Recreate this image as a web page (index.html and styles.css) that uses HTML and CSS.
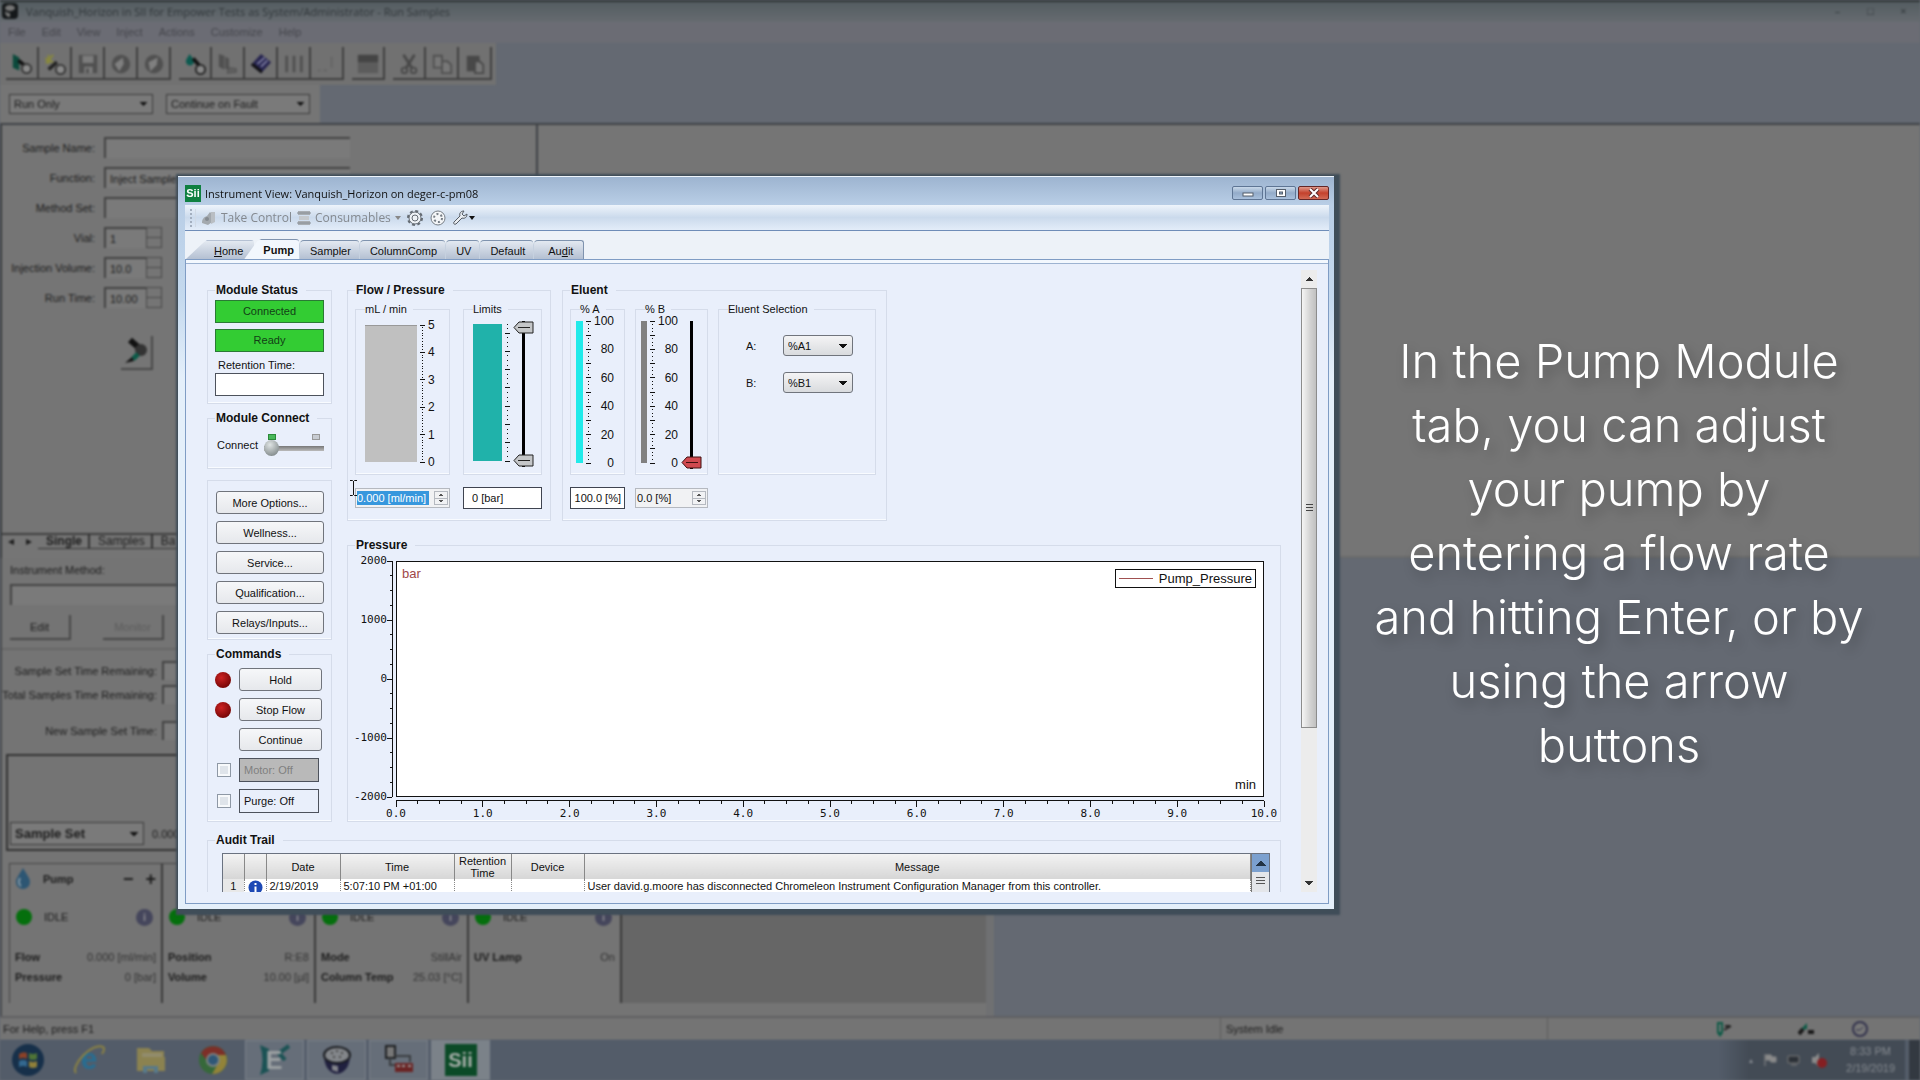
FILE: index.html
```html
<!DOCTYPE html>
<html lang="en">
<head>
  <meta charset="UTF-8">
  <meta name="viewport" content="width=device-width, initial-scale=1">
  <title>Instrument View: Vanquish_Horizon</title>
  <link rel="stylesheet" href="styles.css">
</head>
<body>

<!-- RUN SAMPLES (background application) -->
<div class="desktop">
  <div class="app">
    <header class="app-title">
      <svg width="16" height="16" viewBox="0 0 16 16"><rect width="16" height="16" rx="4" fill="#15181a"/><ellipse cx="8" cy="5" rx="5" ry="3" fill="#777"/><path d="M3 8c2 2 4 2 5 2v4c-3 0-5-2-5-6z" fill="#777"/></svg>
      <span>Vanquish_Horizon in SII for Empower Tests as System/Administrator - Run Samples</span>
      <div class="app-controls">
        <button aria-label="Minimize">&#8211;</button>
        <button aria-label="Restore">&#9633;</button>
        <button aria-label="Close">&#215;</button>
      </div>
    </header>
    <nav class="app-menu">
      <a href="#">File</a><a href="#">Edit</a><a href="#">View</a><a href="#">Inject</a><a href="#">Actions</a><a href="#">Customize</a><a href="#">Help</a>
    </nav>

    <div class="app-bars">
      <div class="toolbar">
        <div class="tool-group">
          <button aria-label="Inject"><svg viewBox="0 0 24 24"><path d="M2 1l7 4v14l-7-3z" fill="#0c4a3c"/><path d="M8 8l6 5" stroke="#111" stroke-width="4"/><circle cx="17" cy="17" r="5" fill="#8a8a8a" stroke="#333" stroke-width="2"/></svg></button>
          <button aria-label="New"><svg viewBox="0 0 24 24"><path d="M5 2v10M1 6l9 4M10 2L2 11" stroke="#8a8a3a" stroke-width="2"/><path d="M5 18l9-8" stroke="#222" stroke-width="4"/><circle cx="18" cy="18" r="5" fill="#8a8a8a" stroke="#333" stroke-width="2"/></svg></button>
          <button aria-label="Save"><svg viewBox="0 0 24 24"><path d="M2 2h20v20H2z" fill="#505050"/><path d="M6 3h12v8H6zM8 15h9v7H8z" fill="#7c7c7c"/><path d="M10 17h3v5h-3z" fill="#505050"/></svg></button>
          <button aria-label="Start"><svg viewBox="0 0 24 24"><circle cx="12" cy="12" r="10" fill="#505050"/><path d="M5 12l9-7 1 7-5 8z" fill="#808080"/></svg></button>
          <button aria-label="Stop"><svg viewBox="0 0 24 24"><circle cx="12" cy="12" r="10" fill="#505050"/><path d="M6 10l10-5-1 8-7 7z" fill="#808080"/></svg></button>
        </div>
        <div class="tool-group">
          <button aria-label="Prime"><svg viewBox="0 0 24 24"><path d="M6 1c3 4 5 6 5 8a4 4 0 0 1-9 0c0-2 2-4 4-8z" fill="#0c5a50"/><path d="M10 6l7 8" stroke="#111" stroke-width="4"/><circle cx="18" cy="18" r="5" fill="#888" stroke="#222" stroke-width="2"/></svg></button>
          <button aria-label="Columns"><svg viewBox="0 0 24 24"><path d="M2 1l6 2v15l-6-3zM9 4l4 2v13l-4-2z" fill="#505050"/><path d="M13 16l8 1v4l-10 1z" fill="#606060" stroke="#505050"/></svg></button>
          <button aria-label="Monitor"><svg viewBox="0 0 24 24"><path d="M12 1l11 9-11 12L1 13z" fill="#26244f"/><path d="M1 13l11 9 2-2-11-9z" fill="#111"/><path d="M8 12l8-7M12 15l7-7" stroke="#7c7ca0" stroke-width="2"/></svg></button>
          <button aria-label="Vials"><svg viewBox="0 0 24 24"><path d="M4 3v18M12 3v18M20 3v18" stroke="#505050" stroke-width="3"/></svg></button>
          <button aria-label="Help"><svg viewBox="0 0 24 24"><path d="M2 19h3M8 19h4M17 4v12" stroke="#646464" stroke-width="2"/></svg></button>
        </div>
        <div class="tool-group">
          <button aria-label="Table"><svg viewBox="0 0 24 24"><path d="M1 2h22v20H1z" fill="#5c5c5c"/><path d="M1 2h22v8H1z" fill="#444"/></svg></button>
        </div>
        <div class="tool-group">
          <button aria-label="Cut"><svg viewBox="0 0 24 24"><path d="M6 2l9 14M18 2L9 16" stroke="#484848" stroke-width="3"/><circle cx="7" cy="19" r="3" fill="none" stroke="#484848" stroke-width="2"/><circle cx="17" cy="19" r="3" fill="none" stroke="#484848" stroke-width="2"/></svg></button>
          <button aria-label="Copy"><svg viewBox="0 0 24 24"><path d="M3 3h9v13H3zM12 9h6l4 4v9H12z" fill="#777" stroke="#505050" stroke-width="2"/></svg></button>
          <button aria-label="Paste"><svg viewBox="0 0 24 24"><path d="M3 3h14v17H3z" fill="#484848"/><path d="M12 9h5l4 4v9h-9z" fill="#777" stroke="#484848" stroke-width="2"/></svg></button>
        </div>
      </div>
      <div class="combos">
        <select aria-label="Run mode"><option>Run Only</option></select>
        <select aria-label="Fault handling"><option>Continue on Fault</option></select>
      </div>
    </div>

    <div class="upper">
      <div class="sample-panel">
        <form class="sample-form">
          <label for="sname">Sample Name:</label><input id="sname" class="wide" type="text">
          <label for="func">Function:</label><input id="func" class="wide" type="text" value="Inject Samples">
          <label for="mset">Method Set:</label><input id="mset" class="wide" type="text">
          <label for="vial">Vial:</label><span class="dim-spin"><input id="vial" type="text" value="1"><i></i></span>
          <label for="injvol">Injection Volume:</label><span class="dim-spin"><input id="injvol" type="text" value="10.0"><i></i></span>
          <label for="rtime">Run Time:</label><span class="dim-spin"><input id="rtime" type="text" value="10.00"><i></i></span>
        </form>
        <button class="inject-btn" aria-label="Start injection"><svg width="26" height="28" viewBox="0 0 26 28"><path d="M7 3l8 7" stroke="#111" stroke-width="6"/><circle cx="18" cy="13" r="6" fill="#333"/><path d="M15 17l-5 5" stroke="#0c5a48" stroke-width="5"/><path d="M9 20l-7 6 9-2z" fill="#111"/></svg></button>
        <div class="sheet-tabs">
          <button aria-label="Previous sheet">&#9666;</button>
          <button aria-label="Next sheet">&#9656;</button>
          <a href="#" class="current">Single</a><a href="#">Samples</a><a href="#">Ba</a>
        </div>
      </div>
      <div class="results-panel"></div>
    </div>

    <div class="lower">
      <div class="status-panel">
        <div class="method">
          <label for="imethod">Instrument Method:</label>
          <input id="imethod" type="text">
          <div class="method-buttons"><button>Edit</button><button disabled>Monitor</button></div>
        </div>
        <div class="times">
          <label for="t1">Sample Set Time Remaining:</label><input id="t1" type="text">
          <label for="t2">Total Samples Time Remaining:</label><input id="t2" type="text">
          <label for="t3" class="last">New Sample Set Time:</label><input id="t3" class="last" type="text">
        </div>
        <div class="plot-box">
          <div class="plot-foot">
            <select aria-label="Plot source"><option>Sample Set</option></select>
            <span>0.000</span>
          </div>
        </div>
        <div class="cards">
          <section class="card">
            <div class="card-head">
              <svg width="16" height="22" viewBox="0 0 16 22"><path d="M8 0c4 7 7 10 7 14a7 7 0 0 1-14 0c0-4 3-7 7-14z" fill="#2d5673"/><path d="M5 10c-2 4-1 7 1 8" stroke="#8296a3" stroke-width="2" fill="none"/></svg>
              <b>Pump</b><button aria-label="Less">&#8722;</button><button aria-label="More">+</button>
            </div>
            <div class="card-state"><i class="dot"></i><span>IDLE</span><i class="info">i</i></div>
            <dl><dt>Flow</dt><dd>0.000 [ml/min]</dd><dt>Pressure</dt><dd>0 [bar]</dd></dl>
          </section>
          <section class="card">
            <div class="card-head"></div>
            <div class="card-state"><i class="dot"></i><span>IDLE</span><i class="info">i</i></div>
            <dl><dt>Position</dt><dd>R:E8</dd><dt>Volume</dt><dd>10.00 [µl]</dd></dl>
          </section>
          <section class="card">
            <div class="card-head"></div>
            <div class="card-state"><i class="dot"></i><span>IDLE</span><i class="info">i</i></div>
            <dl><dt>Mode</dt><dd>StillAir</dd><dt>Column Temp</dt><dd>25.03 [°C]</dd></dl>
          </section>
          <section class="card">
            <div class="card-head"></div>
            <div class="card-state"><i class="dot"></i><span>IDLE</span><i class="info">i</i></div>
            <dl><dt>UV Lamp</dt><dd>On</dd></dl>
          </section>
          <div class="card-rest"></div>
        </div>
      </div>
    </div>

    <footer class="status-bar">
      <span class="help">For Help, press F1</span>
      <span class="idle">System Idle</span>
      <span class="status-icons">
        <svg width="18" height="18" viewBox="0 0 18 18"><path d="M2 2h6v11l-3 4-3-4z" fill="#0e5a46"/><path d="M5 4v8" stroke="#777" stroke-width="2"/><path d="M9 10l7-4M10 6h5" stroke="#222" stroke-width="2"/></svg>
        <svg width="18" height="18" viewBox="0 0 18 18"><path d="M2 10l7-7v6z" fill="#0e5a46"/><path d="M1 14l4-5M10 12h6" stroke="#1a1a1a" stroke-width="4"/></svg>
        <svg width="18" height="18" viewBox="0 0 18 18"><circle cx="9" cy="9" r="7" fill="#777" stroke="#33334d" stroke-width="2"/><path d="M5 10h4l3-3" stroke="#33334d" fill="none"/></svg>
      </span>
    </footer>
  </div>

  <div class="taskbar">
    <button class="start" aria-label="Start"><svg width="34" height="34" viewBox="0 0 34 34"><circle cx="17" cy="17" r="16" fill="#17304a"/><path d="M8 11q4-3 8-1v6q-4-2-8 0z" fill="#8a4128"/><path d="M18 10q4 2 8 0v6q-4 2-8 0z" fill="#4f7437"/><path d="M8 18q4-2 8 0v6q-4-2-8 0z" fill="#33688f"/><path d="M18 18q4 2 8 0v6q-4 2-8 0z" fill="#90803a"/></svg></button>
    <button aria-label="Internet Explorer"><svg width="34" height="36" viewBox="0 0 34 36"><text x="17" y="27" text-anchor="middle" font-family="Liberation Sans" font-size="30" font-weight="bold" fill="#286d91">e</text><path d="M4 31C-2 24 20 0 31 5c2 1 1 4-1 7" fill="none" stroke="#8b8243" stroke-width="2"/></svg></button>
    <button aria-label="Explorer"><svg width="34" height="32" viewBox="0 0 34 32"><path d="M3 4h12l3 3h12v19H3z" fill="#8b8251"/><path d="M8 9h20v10H8z" fill="#928c6c"/><path d="M3 13h28v14H3z" fill="#8b8250"/><path d="M9 29v-7h15v7h-4v-4h-7v4z" fill="#57798b"/></svg></button>
    <button aria-label="Chrome"><svg width="30" height="30" viewBox="0 0 30 30"><circle cx="15" cy="15" r="14" fill="#36683a"/><path d="M3 8a14 14 0 0 1 25 2H15l-5 7z" fill="#7d2f28"/><path d="M28 10a14 14 0 0 1-14 19l7-12-4-7z" fill="#928339"/><circle cx="15" cy="15" r="7" fill="#7d8283"/><circle cx="15" cy="15" r="5" fill="#2f5777"/></svg></button>
    <button class="open" aria-label="Empower"><svg width="34" height="32" viewBox="0 0 34 32"><path d="M2 1l9 4v22l-9 4q5-15 0-30z" fill="#1b5254"/><path d="M31 2L21 9l6 7" stroke="#1b5254" stroke-width="4" fill="none"/><text x="16" y="25" text-anchor="middle" font-family="Liberation Sans" font-size="25" font-weight="bold" fill="#9ba0a2">E</text></svg></button>
    <button class="open" aria-label="Run Samples"><svg width="30" height="30" viewBox="0 0 30 30"><path d="M2 10c0 25 26 25 26 0z" fill="#20203f"/><ellipse cx="15" cy="10" rx="13" ry="8" fill="#83868a" stroke="#1a1c20" stroke-width="2"/><g fill="#333"><circle cx="10" cy="8" r="1"/><circle cx="15" cy="6" r="1"/><circle cx="20" cy="8" r="1"/><circle cx="12" cy="12" r="1"/><circle cx="18" cy="12" r="1"/></g><path d="M10 20l6 1v6l-6-2z" fill="#84868b"/></svg></button>
    <button class="open" aria-label="Configuration"><svg width="32" height="30" viewBox="0 0 32 30"><path d="M3 1h9v12H3z" fill="#777" stroke="#1e2022" stroke-width="2"/><path d="M7 13v7h6M12 11h15v6" fill="none" stroke="#3a3d40" stroke-width="2"/><path d="M12 18h18v9H12z" fill="#6a2424"/><path d="M14 21h3M19 21h3M25 21h3" stroke="#999" stroke-width="2"/></svg></button>
    <button class="open active" aria-label="SII"><span class="sii big">Sii</span></button>
    <div class="tray">
      <span>&#9652;</span>
      <svg width="14" height="14" viewBox="0 0 14 14"><path d="M2 1v12M3 2h5l1 2h4v5H8L7 7H3z" stroke="#8a8a8a" fill="#8a8a8a"/></svg>
      <svg width="14" height="14" viewBox="0 0 14 14"><path d="M1 3h11v7H1zM4 12h6" fill="#2b3036" stroke="#7a7a7a"/></svg>
      <svg width="16" height="16" viewBox="0 0 16 16"><path d="M1 5h3l4-4v14l-4-4H1z" fill="#8a8a8a"/><circle cx="11" cy="11" r="5" fill="#851f22"/></svg>
      <time>8:33 PM<br>2/19/2019</time>
    </div>
    <div class="peek"></div>
  </div>
</div>

<div class="stage">

  <!-- INSTRUMENT VIEW WINDOW -->
  <main class="window">
    <header class="titlebar">
      <span class="sii">Sii</span>
      <h1>Instrument View: Vanquish_Horizon on deger-c-pm08</h1>
      <div class="win-controls">
        <button aria-label="Minimize"><svg width="12" height="10" viewBox="0 0 12 10"><rect x="1" y="5" width="10" height="3" fill="#fff" stroke="#555e6b"/></svg></button>
        <button aria-label="Maximize"><svg width="12" height="10" viewBox="0 0 12 10"><rect x="1.5" y="1.5" width="9" height="7" fill="#fff" stroke="#555e6b"/><rect x="4.5" y="4" width="3" height="2" fill="#8fa9c8" stroke="#555e6b"/></svg></button>
        <button class="close" aria-label="Close"><svg width="12" height="10" viewBox="0 0 12 10"><path d="M2 1l8 8M10 1L2 9" stroke="#5b2a2a" stroke-width="4"/><path d="M2 1l8 8M10 1L2 9" stroke="#fff" stroke-width="2"/></svg></button>
      </div>
    </header>

    <div class="win-toolbar">
      <i class="grip"></i>
      <button disabled><svg width="16" height="16" viewBox="0 0 16 16"><path d="M1 13c0-4 2-6 5-7l3-4 2 2v8l-4 3z" fill="#a3a9ae"/><path d="M10 2h4v10l-4 2z" fill="#b9bec3"/><circle cx="6" cy="9" r="2" fill="#858b91"/></svg>Take Control</button>
      <button disabled><svg width="14" height="16" viewBox="0 0 14 16"><path d="M1 1h12v4H1zM1 11h12v4H1z" fill="#a9aeb3"/><path d="M2 6h10v4H2z" fill="#c5c9cd"/><path d="M0 3h14M0 13h14" stroke="#888e94"/></svg>Consumables<i class="caret"></i></button>
      <button aria-label="Settings"><svg width="18" height="18" viewBox="0 0 18 18"><circle cx="9" cy="9" r="6" fill="#eef2f6" stroke="#646b73"/><circle cx="9" cy="9" r="3" fill="none" stroke="#646b73"/><circle cx="9" cy="9" r="7" fill="none" stroke="#646b73" stroke-width="2" stroke-dasharray="3 2.5"/></svg></button>
      <button aria-label="Carousel"><svg width="18" height="18" viewBox="0 0 18 18"><circle cx="9" cy="9" r="7" fill="#f4f6f8" stroke="#777e86"/><circle cx="9" cy="9" r="4" fill="none" stroke="#777e86" stroke-width="2" stroke-dasharray="2 2.2"/></svg></button>
      <button class="tools" aria-label="Tools"><svg width="16" height="16" viewBox="0 0 16 16"><path d="M2 12l6-6c-1-3 1-5 4-5l-2 3 2 2 3-2c0 3-2 5-5 4l-6 6c-2 1-3-1-2-2z" fill="#e9edf1" stroke="#565c64"/></svg><i class="caret dark"></i></button>
    </div>

    <nav class="tabs">
      <a href="#" class="tab home"><u>H</u>ome</a>
      <a href="#" class="tab active">Pump</a>
      <a href="#" class="tab">Sampler</a>
      <a href="#" class="tab">ColumnComp</a>
      <a href="#" class="tab">UV</a>
      <a href="#" class="tab">Default</a>
      <a href="#" class="tab last">Au<u>d</u>it</a>
    </nav>

    <div class="client">
      <div class="view">
        <div class="columns">

          <!-- LEFT COLUMN -->
          <div class="side">
            <fieldset class="group status">
              <legend>Module Status</legend>
              <div class="state">Connected</div>
              <div class="state">Ready</div>
              <label for="rt">Retention Time:</label>
              <input id="rt" type="text">
            </fieldset>

            <fieldset class="group connect">
              <legend>Module Connect</legend>
              <div class="connect-row">
                <label for="conn">Connect</label>
                <div class="switch">
                  <div class="leds"><i class="on"></i><i></i></div>
                  <input id="conn" type="range" min="0" max="1" value="0">
                </div>
              </div>
            </fieldset>

            <div class="group options">
              <button class="btn">More Options...</button>
              <button class="btn">Wellness...</button>
              <button class="btn">Service...</button>
              <button class="btn">Qualification...</button>
              <button class="btn">Relays/Inputs...</button>
            </div>

            <fieldset class="group commands">
              <legend>Commands</legend>
              <div class="cmd"><i class="led"></i><button class="btn">Hold</button></div>
              <div class="cmd"><i class="led"></i><button class="btn">Stop Flow</button></div>
              <div class="cmd"><i></i><button class="btn">Continue</button></div>
              <div class="cmd"><input id="motor" type="checkbox"><label for="motor" class="off">Motor: Off</label></div>
              <div class="cmd"><input id="purge" type="checkbox"><label for="purge">Purge: Off</label></div>
            </fieldset>
          </div>

          <!-- RIGHT COLUMN -->
          <div class="panels">
            <div class="controls">
              <fieldset class="group">
                <legend>Flow / Pressure</legend>
                <div class="flow-grid">
                  <fieldset class="sub">
                    <legend>mL / min</legend>
                    <div class="gauge flow">
                      <div class="bar gray"></div>
                      <svg class="ticks" data-ticks="50" data-major="10"></svg>
                      <div class="scale"><span>5</span><span>4</span><span>3</span><span>2</span><span>1</span><span>0</span></div>
                    </div>
                  </fieldset>
                  <fieldset class="sub">
                    <legend>Limits</legend>
                    <div class="gauge limits">
                      <div class="bar teal"></div>
                      <svg class="ticks" data-ticks="30" data-major="4"></svg>
                      <div class="slider">
                        <input class="vrange" type="range" value="0" aria-label="Lower limit">
                        <input class="vrange second" type="range" value="100" aria-label="Upper limit">
                      </div>
                    </div>
                  </fieldset>
                  <div class="spinner flow-input">
                    <input class="selected" type="text" value="0.000 [ml/min]" aria-label="Flow">
                    <div class="arrows"><button aria-label="Flow up"></button><button class="down" aria-label="Flow down"></button></div>
                    <svg class="ibeam" width="7" height="16" viewBox="0 0 7 16"><path d="M0 .5h2.500l1 1 1-1H7M3.500 1v14M0 15.500h2.500l1-1 1 1H7" fill="none" stroke="#111"/></svg>
                  </div>
                  <input class="value" type="text" value="0 [bar]" aria-label="Pressure">
                </div>
              </fieldset>

              <fieldset class="group">
                <legend>Eluent</legend>
                <div class="eluent-grid">
                  <fieldset class="sub">
                    <legend>% A</legend>
                    <div class="gauge percent">
                      <div class="bar cyan"></div>
                      <svg class="ticks" data-ticks="40" data-major="4"></svg>
                      <div class="scale"><span>100</span><span>80</span><span>60</span><span>40</span><span>20</span><span>0</span></div>
                    </div>
                  </fieldset>
                  <fieldset class="sub">
                    <legend>% B</legend>
                    <div class="gauge percent">
                      <div class="bar dark"></div>
                      <svg class="ticks" data-ticks="40" data-major="4"></svg>
                      <div class="scale"><span>100</span><span>80</span><span>60</span><span>40</span><span>20</span><span>0</span></div>
                      <div class="slider"><input class="vrange red" type="range" value="0" aria-label="Percent B"></div>
                    </div>
                  </fieldset>
                  <fieldset class="sub">
                    <legend>Eluent Selection</legend>
                    <div class="selection">
                      <label for="ea">A:</label><select id="ea"><option>%A1</option></select>
                      <label for="eb">B:</label><select id="eb"><option>%B1</option></select>
                    </div>
                  </fieldset>
                  <input class="value right" type="text" value="100.0 [%]" aria-label="Percent A value">
                  <div class="spinner">
                    <input type="text" value="0.0 [%]" aria-label="Percent B value">
                    <div class="arrows"><button aria-label="B up"></button><button class="down" aria-label="B down"></button></div>
                  </div>
                </div>
              </fieldset>
            </div>

            <fieldset class="group pressure">
              <legend>Pressure</legend>
              <div class="chart">
                <div class="y-labels"><span>2000</span><span>1000</span><span>0</span><span>-1000</span><span>-2000</span></div>
                <svg class="ticks y-axis" data-ticks="16" data-major="4"></svg>
                <div class="plot">
                  <span class="unit">bar</span>
                  <span class="legend"><i></i>Pump_Pressure</span>
                  <span class="x-unit">min</span>
                </div>
                <svg class="ticks x-axis" data-ticks="40" data-major="4" data-axis="x"></svg>
                <div class="x-labels"><span>0.0</span><span>1.0</span><span>2.0</span><span>3.0</span><span>4.0</span><span>5.0</span><span>6.0</span><span>7.0</span><span>8.0</span><span>9.0</span><span>10.0</span></div>
              </div>
            </fieldset>
          </div>
        </div>

        <fieldset class="group audit">
          <legend>Audit Trail</legend>
          <div class="audit-box">
            <table>
              <colgroup><col class="c-num"><col class="c-icon"><col class="c-date"><col class="c-time"><col class="c-ret"><col class="c-dev"><col></colgroup>
              <thead>
                <tr><th></th><th></th><th>Date</th><th>Time</th><th>Retention Time</th><th>Device</th><th>Message</th></tr>
              </thead>
              <tbody>
                <tr>
                  <td class="num">1</td>
                  <td class="icon"><svg width="15" height="15" viewBox="0 0 15 15"><circle cx="7.500" cy="7.500" r="7" fill="#1d49b5"/><path d="M7.500 3v2M7.500 6.500v6" stroke="#fff" stroke-width="2"/></svg></td>
                  <td>2/19/2019</td>
                  <td>5:07:10 PM +01:00</td>
                  <td></td>
                  <td></td>
                  <td class="msg">User david.g.moore has disconnected Chromeleon Instrument Configuration Manager from this controller.</td>
                </tr>
              </tbody>
            </table>
            <div class="mini-scroll"><button aria-label="Scroll table up"></button><i></i></div>
          </div>
        </fieldset>
      </div>

      <div class="scrollbar">
        <button aria-label="Scroll up"></button>
        <div class="track"><div class="thumb"><i></i></div></div>
        <button class="down" aria-label="Scroll down"></button>
      </div>
    </div>
  </main>

  <p class="caption">In the Pump Module<br>tab, you can adjust<br>your pump by<br>entering a flow rate<br>and hitting Enter, or by<br>using the arrow<br>buttons</p>
</div>

<script>
  // Draw tick marks, counted from the zero end of each scale
  document.querySelectorAll('.ticks').forEach((svg) => {
    const count = Number(svg.dataset.ticks);
    const major = Number(svg.dataset.major);
    const horizontal = svg.dataset.axis === 'x';
    const gauge = svg.closest('.gauge') !== null;

    for (let i = 0; i <= count; i++) {
      const line = document.createElementNS('http://www.w3.org/2000/svg', 'line');
      const pos = i / count * 100;
      const isMajor = i % major === 0;
      if (horizontal) {
        line.setAttribute('x1', pos + '%');
        line.setAttribute('x2', pos + '%');
        line.setAttribute('y1', 0);
        line.setAttribute('y2', isMajor ? 6 : 3);
      } else {
        line.setAttribute('y1', (100 - pos) + '%');
        line.setAttribute('y2', (100 - pos) + '%');
        line.setAttribute('x1', isMajor ? 0 : gauge ? 2 : 3);
        line.setAttribute('x2', isMajor ? 5 : gauge ? 3 : 5);
      }
      svg.appendChild(line);
    }
  });
</script>

</body>
</html>
```
FILE: styles.css
```css
* {
  box-sizing: border-box;
}

body {
  margin: 0;
  font-family: "Liberation Sans", Arial, sans-serif;
  font-size: 11px;
  color: #111;
  background: #646972;
}

button,
input,
select {
  font: inherit;
  color: inherit;
  margin: 0;
  padding: 0;
}

button {
  border: 0;
  background: none;
}

i {
  font-style: normal;
}

a {
  color: inherit;
  text-decoration: none;
}

/* ---------- Background application ---------- */
.desktop {
  display: flex;
  flex-direction: column;
  height: 100vh;
  min-height: 1080px;
  overflow: hidden;
  color: #1c1c1c;
}

.app,
.taskbar {
  filter: blur(1px);
}

.app {
  flex: 1;
  display: flex;
  flex-direction: column;
  min-height: 0;
}

.app-title {
  display: flex;
  align-items: center;
  gap: 8px;
  height: 22px;
  padding: 0 8px 2px 2px;
  border-top: 2px solid #2e3335;
  background: linear-gradient(#545d61, #666b70);
  font-family: "Open Sans", sans-serif;
  color: #30363a;
}

.app-controls {
  display: flex;
  gap: 16px;
  margin-left: auto;
}

.app-controls button {
  width: 17px;
  line-height: 14px;
}

.app-menu {
  display: flex;
  gap: 16px;
  height: 21px;
  padding-left: 8px;
  line-height: 20px;
  color: #45464c;
  background: #6b6c74;
}

.app-bars {
  height: 82px;
  border-bottom: 2px solid #3f4246;
}

.toolbar {
  display: flex;
  gap: 8px;
  width: 496px;
  height: 42px;
  padding: 4px 6px;
  background: #717171;
}

.tool-group {
  display: flex;
}

.tool-group button {
  width: 33px;
  height: 33px;
  padding-top: 4px;
  border-right: 2px solid #404040;
  border-bottom: 2px solid #404040;
}

.tool-group svg {
  width: 22px;
  height: 22px;
}

.combos {
  display: flex;
  gap: 13px;
  width: 320px;
  height: 38px;
  padding: 9px;
  background: #757575;
}

.combos select,
.plot-foot select {
  appearance: none;
  width: 144px;
  height: 20px;
  padding-left: 4px;
  border: 1px solid #3a3a3a;
  border-radius: 0;
  background: conic-gradient(from -45deg at 50% 100%, #111 90deg, transparent 0) right 5px center / 8px 4px no-repeat #7a7a7a;
}

.upper {
  display: flex;
  height: 433px;
}

.sample-panel {
  display: flex;
  flex-direction: column;
  width: 538px;
  padding-top: 12px;
  border-left: 2px solid #3a3d40;
  border-right: 2px solid #3f4246;
  background: #757575;
}

.results-panel {
  flex: 1;
  border-bottom: 2px solid #6a6a6a;
  background: #757575;
}

.sample-form {
  display: grid;
  grid-template-columns: 93px 246px;
  gap: 9px;
  align-items: center;
}

.sample-form label {
  text-align: right;
}

.app input {
  height: 21px;
  padding-left: 4px;
  border: 0;
  border-top: 2px solid #434343;
  border-left: 2px solid #434343;
  background: #7a7a7a;
}

.dim-spin {
  display: flex;
  width: 58px;
}

.dim-spin input {
  width: 42px;
}

.dim-spin i {
  width: 16px;
  border: 1px solid #484848;
  background: linear-gradient(#757575 45%, #484848 45% 55%, #757575 55%);
}

.inject-btn {
  width: 32px;
  height: 34px;
  margin: 28px 0 0 119px;
  border-right: 2px solid #484848;
  border-bottom: 2px solid #484848;
}

.sheet-tabs {
  display: flex;
  align-items: center;
  height: 15px;
  margin: auto 0 10px;
  border-top: 2px solid #3f3f3f;
  font-size: 12px;
  line-height: 14px;
}

.sheet-tabs button {
  width: 18px;
  line-height: 13px;
}

.sheet-tabs a {
  padding: 0 6px 0 8px;
  border-right: 2px solid #333;
  border-bottom: 1px solid #333;
}

.sheet-tabs .current {
  font-weight: bold;
}

.lower {
  flex: 1;
  display: flex;
  min-height: 0;
}

.status-panel {
  display: flex;
  flex-direction: column;
  width: 994px;
  border-left: 2px solid #4a4c4f;
  border-right: 8px solid #6f7072;
  background: #747474;
}

.method {
  display: flex;
  flex-direction: column;
  padding: 5px 0 8px 8px;
  border-bottom: 2px solid #666;
}

.method label {
  line-height: 14px;
  margin-bottom: 7px;
}

.method input {
  width: 480px;
}

.method-buttons {
  display: flex;
  gap: 32px;
  margin-top: 10px;
}

.method-buttons button {
  width: 61px;
  height: 25px;
  border-right: 2px solid #484848;
  border-bottom: 2px solid #484848;
}

.method-buttons button:disabled {
  color: #5c5c5c;
}

.times {
  display: grid;
  grid-template-columns: 155px 160px;
  gap: 5px;
  align-items: center;
  padding: 11px 0 9px;
}

.times label {
  text-align: right;
  white-space: nowrap;
}

.times input {
  height: 19px;
}

.times .last {
  margin-top: 12px;
}

.plot-box {
  display: flex;
  flex-direction: column;
  justify-content: flex-end;
  width: 530px;
  height: 97px;
  margin: 5px 0 12px 4px;
  padding: 0 2px 4px;
  border: 2px solid #333;
}

.plot-foot {
  display: flex;
  align-items: center;
  gap: 8px;
}

.plot-foot select {
  width: 134px;
  height: 23px;
  font-size: 13px;
  font-weight: bold;
}

.cards {
  display: flex;
  height: 140px;
  margin-left: 7px;
  border-left: 1px solid #444;
  border-top: 1px solid #444;
}

.card {
  width: 153px;
  padding: 4px 5px;
  border-right: 2px solid #3a3a3a;
}

.card-rest {
  flex: 1;
  background: #666;
}

.card-head,
.card-state {
  display: flex;
  align-items: center;
  gap: 12px;
  height: 22px;
}

.card-head b {
  margin-right: auto;
}

.card-head button {
  font-size: 18px;
  font-weight: bold;
}

.card-state {
  gap: 12px;
  margin-top: 16px;
}

.dot {
  width: 16px;
  height: 16px;
  margin-left: 1px;
  border-radius: 50%;
  background: #056f0d;
}

.info {
  width: 17px;
  height: 17px;
  margin: 0 3px 0 auto;
  border-radius: 50%;
  background: #45465c;
  color: #8b8b90;
  text-align: center;
  font-weight: bold;
  line-height: 17px;
}

.card dl {
  display: grid;
  grid-template-columns: auto auto;
  row-gap: 6px;
  margin: 22px 0 0;
  line-height: 14px;
}

.card dt {
  font-weight: bold;
}

.card dd {
  margin: 0;
  text-align: right;
  color: #333;
}

.status-bar {
  display: flex;
  align-items: center;
  height: 24px;
  border-top: 2px solid #5f5f62;
  background: #747474;
}

.help {
  flex: 1 0 1218px;
  padding-left: 3px;
}

.idle {
  flex: 0 0 328px;
  padding-left: 5px;
  line-height: 22px;
  border-left: 1px solid #5c5c5c;
  border-right: 1px solid #5c5c5c;
}

.status-icons {
  display: flex;
  justify-content: flex-end;
  gap: 35px;
  flex: 0 0 372px;
  padding-right: 51px;
}

.status-icons svg:first-child {
  margin-right: 30px;
}

.taskbar {
  display: flex;
  align-items: center;
  gap: 3px;
  height: 40px;
  background: #535c69;
  color: #858a90;
}

.taskbar button {
  display: flex;
  align-items: center;
  justify-content: center;
  width: 59px;
  height: 40px;
}

.taskbar .start {
  width: 56px;
}

.taskbar .open {
  border: 1px solid #7b828b;
  background: #666e79;
}

.taskbar .active {
  background: #7b8289;
}

.tray {
  display: flex;
  align-items: center;
  gap: 10px;
  height: 40px;
  margin-left: auto;
  padding: 0 10px 0 30px;
  background: linear-gradient(to right, #535c69, #434b55 30px);
}

.tray span {
  font-size: 8px;
}

.tray time {
  margin-left: 9px;
  text-align: center;
  line-height: 17px;
}

.peek {
  width: 12px;
  height: 40px;
  border-left: 1px solid #5a626c;
  background: #333941;
}

.sii {
  flex: none;
  width: 16px;
  height: 17px;
  background: #0f8040;
  color: #fff;
  font-size: 11px;
  font-weight: bold;
  line-height: 17px;
  text-align: center;
}

.sii.big {
  width: 32px;
  height: 32px;
  background: #0b4a27;
  color: #a9b0ab;
  font-size: 20px;
  line-height: 32px;
}

/* ---------- Overlay with window and caption ---------- */
.stage {
  position: absolute;
  inset: 0;
  display: grid;
  grid-template-columns: minmax(0, 1fr) 500px;
  gap: 35px;
  min-height: 1080px;
  padding: 176px 51px 171px 178px;
}

.caption {
  align-self: center;
  margin: 0;
  padding-top: 20px;
  font-family: Inter, sans-serif;
  font-size: 47px;
  font-weight: 300;
  line-height: 64px;
  text-align: center;
  color: #fff;
  text-shadow: 4px 6px 12px rgba(0, 0, 0, 0.25);
}

.window {
  display: flex;
  flex-direction: column;
  min-height: 0;
  padding: 0 5px 5px 7px;
  border-top: 1px solid #eef4fa;
  background: linear-gradient(#9db4d0, #b9cee6 28px, #c4d9ee 120px, #e4effa 200px);
  box-shadow: 2px 2px 2px 4px #3f4d58;
}

.titlebar {
  display: flex;
  align-items: center;
  gap: 4px;
  height: 28px;
  padding-top: 4px;
}

.titlebar h1 {
  margin: 0;
  font-family: "Open Sans", sans-serif;
  font-size: 11px;
  font-weight: 400;
}

.win-controls {
  display: flex;
  gap: 2px;
  margin-left: auto;
}

.win-controls button {
  display: flex;
  align-items: center;
  justify-content: center;
  width: 31px;
  height: 14px;
  border: 1px solid #5e7594;
  border-radius: 2px;
  background: linear-gradient(#c9d9ea, #93abc9 50%, #a9c0dc);
}

.win-controls .close {
  border-color: #642626;
  background: linear-gradient(#e09a8c, #c4412c 50%, #d26a55);
}

.win-toolbar {
  display: flex;
  align-items: center;
  gap: 5px;
  height: 26px;
  padding-left: 5px;
  border-bottom: 1px solid #6f8db8;
  background: linear-gradient(#eef4fb, #cbdaec 50%, #e3edf9);
  font-family: "Open Sans", sans-serif;
  font-size: 12px;
}

.win-toolbar button {
  display: flex;
  align-items: center;
  gap: 4px;
}

.win-toolbar .tools {
  gap: 1px;
}

.win-toolbar button:disabled {
  color: #84898f;
}

.grip {
  width: 6px;
  height: 18px;
  border-left: 2px dotted #a3afbf;
  border-right: 1px solid #d0dae6;
}

.caret {
  border: 3px solid transparent;
  border-top: 4px solid #888;
  border-bottom: 0;
}

.caret.dark {
  border-top-color: #111;
}

.tabs {
  display: flex;
  align-items: flex-end;
  height: 28px;
  padding-left: 1px;
  background: #edf2f8;
}

.tab {
  height: 19px;
  padding: 0 8px 0 10px;
  border: 1px solid #7f93ae;
  border-left-color: #c6d1df;
  border-right: 0;
  border-bottom: 0;
  border-radius: 5px 3px 0 0;
  background: linear-gradient(#e3e9f1, #b4c0d2);
  line-height: 20px;
}

.tab.last {
  padding: 0 10px 0 14px;
  border-right: 1px solid #7f93ae;
}

.tab.home {
  padding: 0 11px 0 27px;
  border-color: transparent;
  clip-path: polygon(0 100%, 17px 3px, 21px 0, 100% 0, 100% 100%);
}

.tab.active {
  height: 20px;
  margin-left: -10px;
  padding: 0 5px 0 18px;
  border-color: #7f93ae;
  border-left-color: transparent;
  background: #f2f7fd;
  font-weight: bold;
  clip-path: polygon(0 100%, 13px 2px, 17px 0, 100% 0, 100% 100%);
}

.client {
  flex: 1;
  display: flex;
  justify-content: space-between;
  min-height: 0;
  padding: 10px 11px 11px 21px;
  border: 1px solid #7f9cc4;
  background: #e9effb;
  box-shadow: inset 0 3px 0 #f3f8fe, inset 0 4px 0 #9db3d1;
}

/* ---------- Scrolled view ---------- */
.view {
  flex: 1;
  overflow: hidden;
  padding-top: 13px;
}

.columns {
  display: grid;
  grid-template-columns: 125px minmax(0, 1fr);
  gap: 15px;
}

.side,
.panels {
  display: flex;
  flex-direction: column;
}

.group,
.sub {
  min-width: 0;
  margin: 0;
  padding: 0 7px;
  border: 1px solid #d5dcea;
  box-shadow: inset 0 -1px 0 #f8fbff;
}

.group > legend {
  padding: 0 8px 0 1px;
  font-size: 12px;
  font-weight: bold;
  line-height: 14px;
}

.status {
  height: 121px;
}

.state {
  height: 23px;
  margin: 3px 0 6px;
  border: 1px solid #2a7a35;
  background: #33cc33;
  line-height: 21px;
  text-align: center;
  color: #123f16;
}

.status label {
  display: block;
  margin: 5px 0 1px 3px;
  line-height: 14px;
}

.status input {
  display: block;
  width: 100%;
  height: 23px;
  border: 1px solid #4d525c;
  background: #fff;
}

.connect {
  height: 58px;
  margin-top: 7px;
}

.connect-row {
  display: flex;
  align-items: center;
  gap: 6px;
  padding: 9px 0 0 2px;
}

.switch {
  flex: 1;
}

.leds {
  display: flex;
  justify-content: space-between;
  padding: 0 4px;
}

.leds i {
  width: 8px;
  height: 6px;
  border: 1px solid #999;
  background: #c8ccd2;
}

.leds .on {
  border-color: #2b8a3a;
  background: #48b85a;
}

.switch input {
  appearance: none;
  display: block;
  width: 100%;
  height: 16px;
  background: linear-gradient(#777, #bbb) center / 100% 5px no-repeat;
}

.switch input::-webkit-slider-thumb {
  appearance: none;
  width: 15px;
  height: 16px;
  border-radius: 50%;
  background: radial-gradient(circle at 40% 30%, #dfe4e4, #6d7677);
}

.options {
  display: flex;
  flex-direction: column;
  gap: 7px;
  margin: 11px 0 7px;
  padding: 10px 7px 5px 8px;
}

.btn {
  height: 23px;
  border: 1px solid #70747c;
  border-radius: 3px;
  background: linear-gradient(#f6f7f9, #e6e8ec);
}

.commands {
  flex: 1;
  padding-top: 7px;
}

.cmd {
  display: grid;
  grid-template-columns: 16px 83px;
  gap: 8px;
  align-items: center;
  margin-bottom: 7px;
}

.cmd:last-child {
  margin-bottom: 0;
}

.cmd label {
  width: 80px;
  height: 24px;
  padding-left: 4px;
  border: 1px solid #4d525c;
  line-height: 22px;
}

.cmd label.off {
  background: #b9b9b9;
  color: #808080;
}

.led {
  width: 16px;
  height: 16px;
  border-radius: 50%;
  background: radial-gradient(circle at 40% 35%, #c22, #7c0808 70%);
}

.cmd input {
  appearance: none;
  width: 14px;
  height: 14px;
  margin-left: 2px;
  border: 1px solid #8e98a5;
  background: #dfe4ea;
  box-shadow: inset 0 0 0 2px #f7f9fb;
}

.controls {
  display: flex;
  gap: 11px;
  height: 238px;
}

.flow-grid,
.eluent-grid {
  display: grid;
  gap: 12px 13px;
  padding-top: 5px;
  align-items: center;
}

.flow-grid {
  grid-template: 173px 22px / 95px 79px;
  padding-right: 1px;
}

.eluent-grid {
  grid-template: 173px 22px / 55px 73px 158px;
  column-gap: 10px;
  padding-right: 3px;
}

.sub {
  height: 173px;
  padding: 0 5px;
}

.sub > legend {
  margin-left: 4px;
  padding: 0 6px 0 0;
  line-height: 14px;
}

.gauge {
  display: flex;
  gap: 3px;
}

.gauge.flow {
  height: 137px;
  margin: 9px 0 0 4px;
}

.gauge.limits {
  height: 137px;
  margin: 8px 0 0 4px;
}

.gauge.percent {
  height: 142px;
  margin-top: 5px;
}

.bar {
  width: 7px;
}

.flow .bar {
  width: 52px;
}

.limits .bar {
  width: 29px;
}

.bar.gray {
  background: #c0c0c0;
  border-top: 1px solid #999;
}

.bar.teal {
  background: #20b2aa;
}

.bar.cyan {
  background: #22eaea;
}

.bar.dark {
  background: #808080;
}

.ticks {
  display: block;
  width: 5px;
  height: 100%;
  overflow: visible;
}

.ticks line {
  stroke: #111;
  shape-rendering: crispEdges;
}

.scale {
  display: flex;
  flex-direction: column;
  justify-content: space-between;
  margin: -6px 0;
  font-size: 12px;
  line-height: 12px;
}

.percent .scale {
  width: 20px;
  text-align: right;
}

.slider {
  position: relative;
  width: 21px;
  height: 148px;
}

.limits .slider {
  height: 146px;
  margin-top: -3px;
}

/* Range inputs turned upright, zero at the bottom */
.vrange {
  appearance: none;
  display: block;
  writing-mode: vertical-lr;
  direction: rtl;
  width: 21px;
  height: 100%;
  background: linear-gradient(#000, #000) center / 3px 100% no-repeat;
}

.vrange.second {
  position: absolute;
  inset: 0;
  background: none;
}

.vrange::-webkit-slider-thumb {
  appearance: none;
  width: 21px;
  height: 13px;
  background: url("data:image/svg+xml,%3Csvg xmlns='http://www.w3.org/2000/svg' viewBox='0 0 21 13'%3E%3Cpath d='M1 6.500L6 1h14v11H6z' fill='%23c4c6c8' stroke='%23222'/%3E%3Cpath d='M5 6.500h12' stroke='%23222'/%3E%3C/svg%3E") no-repeat;
}

.vrange.red::-webkit-slider-thumb {
  background: url("data:image/svg+xml,%3Csvg xmlns='http://www.w3.org/2000/svg' viewBox='0 0 21 13'%3E%3Cpath d='M1 6.500L6 1h14v11H6z' fill='%23d0494f' stroke='%23401010'/%3E%3Cpath d='M5 6.500h12' stroke='%23401010'/%3E%3C/svg%3E") no-repeat;
}

.value {
  width: 100%;
  height: 22px;
  padding-left: 8px;
  border: 1px solid #3f4450;
  background: #fff;
}

.value.right {
  padding: 0 3px;
  text-align: right;
}

.spinner {
  position: relative;
  display: flex;
  justify-content: space-between;
  height: 20px;
  padding: 2px 1px;
  border: 1px solid #b5b9c0;
  background: #f1f2f4;
}

.spinner input {
  width: 50px;
  border: 0;
  background: none;
}

.spinner .selected {
  width: 72px;
  background: #3797dd;
  color: #fff;
}

.arrows {
  display: flex;
  flex-direction: column;
  width: 14px;
  border: 1px solid #b5b9c0;
}

.arrows button {
  flex: 1;
  background: conic-gradient(from -40deg at 50% 100%, transparent 0) center / 6px 3px no-repeat;
  background: conic-gradient(from 140deg at 50% 0, #555 80deg, transparent 0) center / 6px 3px no-repeat;
}

.arrows .down {
  border-top: 1px solid #b5b9c0;
  background: conic-gradient(from -40deg at 50% 100%, #555 80deg, transparent 0) center / 6px 3px no-repeat;
}

.ibeam {
  position: absolute;
  left: -6px;
  top: -9px;
}

.selection {
  display: grid;
  grid-template-columns: 37px 70px;
  row-gap: 16px;
  align-items: center;
  padding: 19px 0 0 22px;
}

.selection select {
  appearance: none;
  height: 21px;
  padding-left: 4px;
  border: 1px solid #70747c;
  border-radius: 3px;
  background: conic-gradient(from -45deg at 50% 100%, #111 90deg, transparent 0) right 5px center / 8px 4px no-repeat, linear-gradient(#f4f4f5, #d9dbde);
}

/* ---------- Pressure chart ---------- */
.pressure {
  flex: 1;
  margin-top: 17px;
  padding: 9px 16px 0 0;
}

.pressure > legend {
  margin-left: 7px;
}

.chart {
  display: grid;
  grid-template: 236px 6px 12px / 39px 9px minmax(0, 1fr);
  row-gap: 3px;
  font-family: "DejaVu Sans Mono", monospace;
  font-size: 11px;
}

.y-labels {
  display: flex;
  flex-direction: column;
  justify-content: space-between;
  margin: -6px 0;
  line-height: 12px;
  text-align: right;
}

.y-axis {
  width: 6px;
  border-right: 1px solid #111;
}

.plot {
  display: grid;
  grid-template: auto 1fr / 1fr auto;
  padding: 7px 7px 4px 5px;
  border: 1px solid #111;
  background: #fff;
  font-family: "Liberation Sans", Arial, sans-serif;
  font-size: 13px;
}

.unit {
  color: #a04848;
  line-height: 10px;
}

.legend {
  display: flex;
  align-items: center;
  gap: 6px;
  height: 19px;
  padding: 0 3px;
  border: 1px solid #111;
}

.legend i {
  width: 34px;
  border-top: 1px solid #a05050;
}

.x-unit {
  grid-column: 2;
  align-self: end;
  justify-self: end;
}

.x-axis {
  grid-column: 3;
  width: 100%;
  height: 6px;
  border-top: 1px solid #111;
}

.x-labels {
  grid-column: 3;
  display: flex;
  justify-content: space-between;
  line-height: 10px;
}

.x-labels span {
  display: flex;
  justify-content: center;
  width: 0;
}

/* ---------- Audit trail ---------- */
.audit {
  margin-top: 11px;
  padding: 6px 10px 0 14px;
}

.audit > legend {
  margin-left: -7px;
}

.audit-box {
  display: flex;
  border: 1px solid #6a7280;
  border-bottom: 0;
}

.audit table {
  flex: 1;
  table-layout: fixed;
  border-collapse: collapse;
  background: #fff;
}

.c-num { width: 21px; }
.c-icon { width: 22px; }
.c-date { width: 74px; }
.c-time { width: 114px; }
.c-ret { width: 57px; }
.c-dev { width: 73px; }

.audit th {
  height: 25px;
  padding: 0;
  border-right: 1px solid #888;
  background: linear-gradient(#f3f3f3, #d6d6d6);
  font-weight: 400;
  line-height: 12px;
}

.audit td {
  height: 18px;
  padding: 1px 3px 0;
  border-right: 1px dotted #888;
  line-height: 12px;
  vertical-align: top;
  white-space: nowrap;
}

.audit td.num {
  background: #e8e8e8;
  text-align: center;
}

.audit .icon svg {
  display: block;
}

.mini-scroll {
  width: 18px;
  border-left: 1px solid #777;
  background: #e4e6ea;
}

.mini-scroll button {
  display: block;
  width: 100%;
  height: 18px;
  background: conic-gradient(from 130deg at 50% 0, #234 100deg, transparent 0) center / 10px 5px no-repeat, #7ba0cf;
}

.mini-scroll i {
  display: block;
  height: 8px;
  margin: 5px 4px;
  background: repeating-linear-gradient(#555 0 1px, transparent 1px 3px);
}

/* ---------- Scrollbar ---------- */
.scrollbar {
  display: flex;
  flex-direction: column;
  width: 16px;
  margin-left: 20px;
  background: #ececec;
}

.scrollbar button {
  height: 18px;
  background: conic-gradient(from 135deg at 50% 0, #333 90deg, transparent 0) center / 8px 4px no-repeat;
}

.scrollbar .down {
  background: conic-gradient(from -45deg at 50% 100%, #333 90deg, transparent 0) center / 8px 4px no-repeat;
}

.track {
  flex: 1;
}

.thumb {
  display: flex;
  align-items: center;
  justify-content: center;
  height: 75%;
  border: 1px solid #8c8c8c;
  background: linear-gradient(to right, #f5f5f5, #d2d2d2 60%, #c0c0c0);
}

.thumb i {
  width: 7px;
  height: 8px;
  background: repeating-linear-gradient(#444 0 1px, transparent 1px 3px);
}
```
